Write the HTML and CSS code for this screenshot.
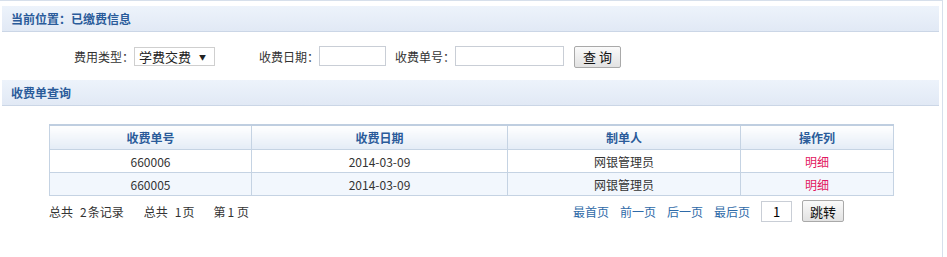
FILE: index.html
```html
<!DOCTYPE html>
<html>
<head>
  <meta charset="utf-8">
  <title>已缴费信息</title>
  <link rel="stylesheet" href="styles.css">
</head>
<body>
  <div class="wrap">
    <div class="bar">当前位置：已缴费信息</div>

    <div class="filter">
      <span class="lbl">费用类型：</span>
      <div class="sel">学费交费 <span class="arrow">▼</span></div>
      <span class="lbl lbl-date">收费日期：</span>
      <input class="ipt ipt-date" type="text">
      <span class="lbl lbl-no">收费单号：</span>
      <input class="ipt ipt-no" type="text">
      <button class="btn btn-query">查 询</button>
    </div>

    <div class="bar">收费单查询</div>

    <div class="list">
      <table class="grid">
        <tr>
          <th class="c1">收费单号</th>
          <th class="c2">收费日期</th>
          <th class="c3">制单人</th>
          <th>操作列</th>
        </tr>
        <tr>
          <td>660006</td>
          <td>2014-03-09</td>
          <td>网银管理员</td>
          <td><a class="detail" href="#">明细</a></td>
        </tr>
        <tr class="alt">
          <td>660005</td>
          <td>2014-03-09</td>
          <td>网银管理员</td>
          <td><a class="detail" href="#">明细</a></td>
        </tr>
      </table>

      <div class="pager">
        <div class="info">
          <span>总共</span><span class="num">2</span><span>条记录</span>
          <span class="sp">总共</span><span class="num">1</span><span>页</span>
          <span class="sp2">第</span><span class="num1">1</span><span>页</span>
        </div>
        <div class="nav">
          <a href="#">最首页</a>
          <a href="#">前一页</a>
          <a href="#">后一页</a>
          <a href="#">最后页</a>
          <input class="ipt ipt-page" type="text" value="1">
          <button class="btn btn-go">跳转</button>
        </div>
      </div>
    </div>
  </div>
</body>
</html>
```

FILE: styles.css
```css
body {
  margin: 0;
  font-family: "Noto Sans CJK SC", "Liberation Sans", sans-serif;
  font-size: 12px;
  color: #333;
  background-color: #fff;
}
.wrap {
  width: 943px;
  height: 257px;
  border-top: 1px solid #d6dfeb;
  border-right: 1px solid #d6dfeb;
  box-sizing: border-box;
  padding: 5px 3px 0 2px;
}
.bar {
  height: 26px;
  line-height: 26px;
  padding-left: 9px;
  font-weight: bold;
  color: #2a5b9a;
  background: linear-gradient(#edf3fb, #e1e9f5);
  border-bottom: 1px solid #cbd6e6;
  box-sizing: border-box;
}
.filter {
  display: flex;
  align-items: center;
  height: 48px;
  padding-left: 72px;
  color: #333;
}
.lbl {
  white-space: nowrap;
}
.lbl-date {
  margin-left: 44px;
}
.lbl-no {
  margin-left: 9px;
}
.sel {
  width: 81px;
  height: 19px;
  line-height: 18px;
  padding-left: 4px;
  border: 1px solid #cfcfcf;
  box-sizing: border-box;
  font-size: 13px;
  color: #222;
  background: #fff;
}
.arrow {
  display: inline-block;
  font-size: 7px;
  margin-left: 5px;
  vertical-align: 2px;
}
.ipt {
  height: 20px;
  border: 1px solid #c9ced6;
  box-sizing: border-box;
  padding: 0 4px;
  font-family: inherit;
  font-size: 13px;
  outline: none;
}
.ipt-date {
  width: 67px;
}
.ipt-no {
  width: 109px;
}
.btn {
  height: 22px;
  padding: 0;
  border: 1px solid #a9a9a9;
  border-radius: 2px;
  background: linear-gradient(#fafafa, #e2e2e2);
  font-family: inherit;
  font-size: 13px;
  color: #111;
  cursor: pointer;
}
.btn-query {
  width: 47px;
  margin-left: 10px;
  margin-top: 1px;
}
.list {
  padding: 18px 0 0 47px;
}
.grid {
  width: 845px;
  border-collapse: collapse;
  border: 1px solid #bccbdc;
}
.grid th {
  height: 23px;
  font-weight: bold;
  color: #2a5b9a;
  background: linear-gradient(#ffffff, #e4ecf6);
  border: 1px solid #c5d3e3;
  border-top: 2px solid #bfcee0;
  padding: 0;
}
.grid td {
  height: 22px;
  text-align: center;
  border: 1px solid #c5d3e3;
  padding: 0;
}
.grid .c1 {
  width: 201px;
}
.grid .c2 {
  width: 255px;
}
.grid .c3 {
  width: 232px;
}
.grid tr.alt td {
  background-color: #f2f7fd;
}
.detail {
  color: #e2175f;
  text-decoration: none;
}
.pager {
  display: flex;
  justify-content: space-between;
  align-items: center;
  width: 845px;
  height: 30px;
}
.info {
  display: flex;
  align-items: center;
}
.info .num {
  margin: 0 1px 0 7px;
}
.info .num1 {
  margin: 0 3px 0 2px;
}
.info .sp {
  margin-left: 20px;
}
.info .sp2 {
  margin-left: 19px;
}
.nav {
  display: flex;
  align-items: center;
  padding-right: 50px;
}
.nav a {
  color: #2e6aa8;
  text-decoration: none;
  margin-right: 11px;
}
.ipt-page {
  width: 31px;
  height: 21px;
  text-align: center;
}
.btn-go {
  width: 42px;
  margin-left: 10px;
}
```
